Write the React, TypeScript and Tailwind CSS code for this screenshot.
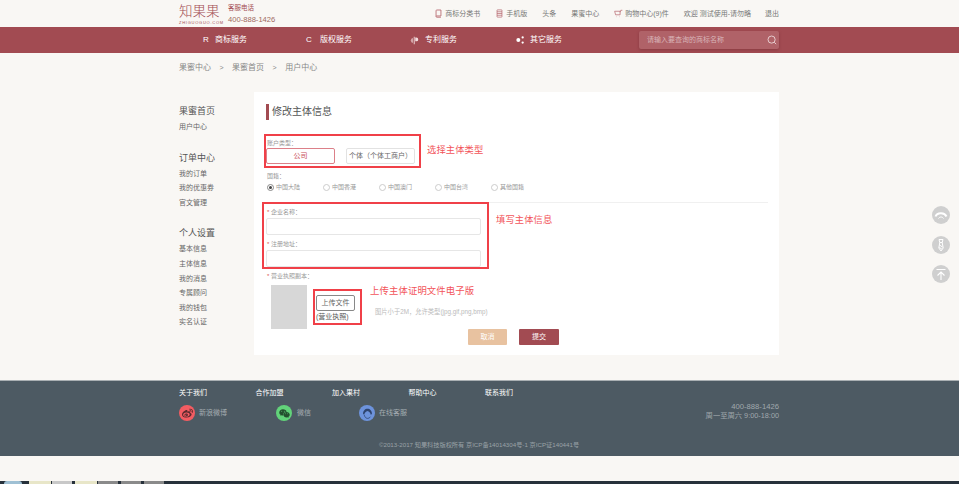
import { FaWeibo, FaWeixin } from "react-icons/fa";

const FONT = "font-['Liberation_Sans','Noto_Sans_CJK_SC',sans-serif]";

const topLinks = ["关于我们", "合作加盟", "加入果村", "帮助中心", "联系我们"];
const radios = ["中国大陆", "中国香港", "中国澳门", "中国台湾", "其他国籍"];

const sideGroups = [
  { title: "果蜜首页", items: ["用户中心"], top: "" },
  { title: "订单中心", items: ["我的订单", "我的优惠券", "官文管理"], top: "mt-[16px]" },
  { title: "个人设置", items: ["基本信息", "主体信息", "我的消息", "专属顾问", "我的钱包", "实名认证"], top: "mt-[16px]" },
];

const BookIcon = () => (
  <svg viewBox="0 0 10 12" className="h-[9px] w-[7px] shrink-0" fill="none" stroke="#b5646b" strokeWidth="1.2">
    <path d="M1.500 10V2a1 1 0 0 1 1-1h6v8.500h-6a1 1 0 0 0-1 1 1 1 0 0 0 1 .8h6" />
  </svg>
);

const MobileIcon = () => (
  <svg viewBox="0 0 10 12" className="h-[9px] w-[7px] shrink-0" fill="none" stroke="#b5646b" strokeWidth="1">
    <rect x="1.500" y="0.800" width="7" height="10.400" rx="0.600" />
    <path d="M1.500 3.500h7M1.500 6h7M1.500 8.500h7" />
  </svg>
);

const CartIcon = () => (
  <svg viewBox="0 0 14 12" className="h-[9px] w-[9px] shrink-0" fill="none" stroke="#b5646b" strokeWidth="1.1">
    <path d="M1 2.500h8.500V8H2.500zM9.500 4l1-3H13M3.500 11h.5M8 11h.5" />
  </svg>
);

const PatentIcon = () => (
  <svg viewBox="0 0 12 12" className="h-[9px] w-[9px] shrink-0" fill="#f3dfe0">
    <path d="M1 6a3.500 3.500 0 0 1 3-3.400v6.800A3.500 3.500 0 0 1 1 6z" opacity=".6" />
    <rect x="5" y="1" width="1.200" height="10" />
    <path d="M7 2h1.500a2.500 2.500 0 0 1 0 5H7z" />
  </svg>
);

const ShareIcon = () => (
  <svg viewBox="0 0 12 12" className="h-[8px] w-[8px] shrink-0" fill="#ffffff">
    <circle cx="3.500" cy="6" r="3" />
    <circle cx="10" cy="2.200" r="1.700" />
    <circle cx="10" cy="9.800" r="1.700" />
  </svg>
);

const SearchIcon = () => (
  <svg viewBox="0 0 12 12" className="h-[10px] w-[10px]" fill="none" stroke="#f0dfe0" strokeWidth="1">
    <circle cx="5.500" cy="5.500" r="4.300" />
    <path d="M8.700 8.700L11 11" />
  </svg>
);

const AgentIcon = () => (
  <svg viewBox="0 0 16 16" className="h-[13px] w-[13px]" fill="none">
    <path d="M2.500 8.500C2.500 4.500 5 2 8 2s5.500 2.500 5.500 6.500l-1.500 1C11.500 6.500 10 5.500 8 4.800 6 5.500 4.500 6.500 4 9.500z" fill="#2f4570" />
    <path d="M4 10c1 3 2.500 4 4 4s2.500-.5 3.500-2" stroke="#2f4570" strokeWidth="1" />
  </svg>
);

const BackIcon = () => (
  <svg viewBox="0 0 18 18" className="h-[18px] w-[18px]" fill="none" stroke="#ffffff">
    <path d="M3.500 10.500C5 6.500 12.500 6 14.500 10.500" strokeWidth="2" />
    <path d="M6.500 12.500C7.500 10.500 10.500 10.500 11.500 12.500" strokeWidth="1" />
  </svg>
);

const TieIcon = () => (
  <svg viewBox="0 0 18 18" className="h-[18px] w-[18px]" fill="none" stroke="#ffffff" strokeWidth="1">
    <path d="M7 3.500h4l-.8 3H7.800zM7.800 6.500L6.800 12 9 15l2.200-3-1-5.500z" />
    <path d="M7.500 9l3 2M7.300 11.500l2.500 1.500" />
  </svg>
);

const TopIcon = () => (
  <svg viewBox="0 0 18 18" className="h-[18px] w-[18px]" fill="none" stroke="#ffffff" strokeWidth="1.100">
    <path d="M4.500 4.500h9M9 15V7.500M5.500 10.500L9 7l3.500 3.500" />
  </svg>
);

const Field = ({ label }: { label: string }) => (
  <div>
    <div className="h-[8px] pl-[1px] text-[6px] leading-[8px] text-[#999]">
      <span className="text-[#d9534f]">* </span>
      {label}
    </div>
    <div className="mt-[2px] h-[17px] w-[215px] rounded-[2px] border border-[#e6e6e6] bg-white" />
  </div>
);

export default function App() {
  return (
    <div className={`${FONT} relative min-h-[484px] w-full overflow-hidden bg-[#f9f7f4]`}>
      {/* header */}
      <header className="ml-[179px] flex h-[27px] w-[600px] items-center justify-between">
        <div className="flex items-center">
          <div className="w-[42px]">
            <div className="h-[18px] text-[13.500px] font-light leading-[19px] text-[#a24b52]">知果果</div>
            <div className="text-[4px] leading-[5px] tracking-[0.750px] text-[#a24b52]">ZHIGUOGUO.COM</div>
          </div>
          <div className="ml-[7px]">
            <div className="mt-[2px] text-[6.500px] leading-[8px] text-[#a24b52]">客服电话</div>
            <div className="mt-[3px] text-[7.600px] leading-[10px] text-[#a06a5f]">400-888-1426</div>
          </div>
        </div>
        <nav className="flex items-center text-[7px] leading-[9px] text-[#777]">
          <span className="flex items-center gap-[3px]"><BookIcon />商标分类书</span>
          <span className="ml-[16px] flex items-center gap-[3px]"><MobileIcon />手机版</span>
          <span className="ml-[15px]">头条</span>
          <span className="ml-[15px]">果蜜中心</span>
          <span className="ml-[15px] flex items-center gap-[2px]"><CartIcon />购物中心(9)件</span>
          <span className="ml-[15px]">欢迎 测试使用-请勿略</span>
          <span className="ml-[14px]">退出</span>
        </nav>
      </header>

      {/* main nav */}
      <div className="flex h-[26px] items-center bg-[#a24b52] pl-[203px] text-[8px] text-white">
        <span className="flex w-[103px] items-center"><span className="w-[12px]">R</span>商标服务</span>
        <span className="flex w-[104px] items-center"><span className="w-[14px]">C</span>版权服务</span>
        <span className="flex w-[106px] items-center"><PatentIcon /><span className="ml-[6px]">专利服务</span></span>
        <span className="flex w-[123px] items-center"><ShareIcon /><span className="ml-[6px]">其它服务</span></span>
        <div className="flex h-[18px] w-[140px] items-center justify-between rounded-[2px] bg-[#b06268] pl-[8px] pr-[2px] shadow-[0_1px_3px_rgba(90,30,35,0.35)]">
          <span className="text-[7px] text-[#d9b5b8]">请输入要查询的商标名称</span>
          <SearchIcon />
        </div>
      </div>

      {/* breadcrumb */}
      <div className="ml-[179px] flex h-[39px] items-center pb-[9px] text-[8px] text-[#888]">
        <span>果蜜中心</span>
        <span className="mx-[8.500px] text-[7px]">&gt;</span>
        <span>果蜜首页</span>
        <span className="mx-[8.500px] text-[7px]">&gt;</span>
        <span>用户中心</span>
      </div>

      <div className="ml-[179px] flex w-[600px]">
        {/* sidebar */}
        <aside className="w-[75px] pt-[12px]">
          {sideGroups.map((g) => (
            <div key={g.title} className={g.top}>
              <div className="h-[14px] text-[9px] leading-[14px] text-[#555]">{g.title}</div>
              <div className="mt-[2px]">
                {g.items.map((item) => (
                  <div key={item} className="h-[14.600px] text-[7px] leading-[14px] text-[#666]">{item}</div>
                ))}
              </div>
            </div>
          ))}
        </aside>

        {/* form panel */}
        <main className="h-[263px] w-[525px] bg-white pt-[12px]">
          <h1 className="ml-[12px] h-[16px] border-l-[3px] border-[#a24b52] pl-[3px] text-[10px] font-normal leading-[16px] text-[#555]">
            修改主体信息
          </h1>

          <div className="ml-[10px] mt-[14px] flex items-center">
            <div className="h-[34px] w-[157px] border-2 border-[#f04048] pr-[4px]">
              <div className="h-[12px] pl-[1px] pt-[3px] text-[6px] leading-[8px] text-[#999]">账户类型：</div>
              <div className="flex justify-between">
                <div className="flex h-[16px] w-[69px] items-center justify-center rounded-[2px] border border-[#dc8089] text-[7px] text-[#c9505a]">公司</div>
                <div className="flex h-[16px] w-[69px] items-center justify-center rounded-[2px] border border-[#e2e2e2] text-[7px] text-[#666]">个体（个体工商户）</div>
              </div>
            </div>
            <span className="ml-[6px] text-[9.300px] tracking-[0.100px] text-[#f2545a]">选择主体类型</span>
          </div>

          <div className="ml-[13px] mt-[4px] h-[8px] text-[6px] leading-[8px] text-[#999]">国籍：</div>
          <div className="ml-[13px] mt-[2px] flex h-[10px]">
            {radios.map((r, i) => (
              <label key={r} className="flex w-[56px] items-center text-[6px] text-[#999]">
                <span className={`flex h-[7px] w-[7px] items-center justify-center rounded-full border ${i === 0 ? "border-[#888]" : "border-[#ccc]"}`}>
                  {i === 0 && <span className="h-[3px] w-[3px] rounded-full bg-[#444]" />}
                </span>
                <span className="ml-[2px]">{r}</span>
              </label>
            ))}
          </div>

          <div className="ml-[8px] mr-[11px] mt-[10px] flex items-center border-t border-[#f0f0f0]">
            <div className="-mt-px h-[67px] w-[227px] border-2 border-[#f04048] pl-[2px] pt-[4px]">
              <Field label="企业名称：" />
              <div className="mt-[5px]"><Field label="注册地址：" /></div>
            </div>
            <span className="ml-[7px] -mt-[30px] text-[9.300px] tracking-[0.100px] text-[#f2545a]">填写主体信息</span>
          </div>

          <div className="ml-[13px] mt-[3px] h-[8px] text-[6px] leading-[8px] text-[#999]">
            <span className="text-[#d9534f]">* </span>营业执照副本：
          </div>

          <div className="ml-[17px] mt-[5px] flex">
            <div className="h-[44px] w-[36px] bg-[#d7d7d7]" />
            <div className="ml-[6px] mt-[4px] flex h-[36px] w-[49px] flex-col border-2 border-[#f04048] pl-[1px] pt-[4px]">
              <div className="flex h-[16px] w-[39px] items-center justify-center rounded-[2px] border border-[#888] text-[7px] text-[#666]">上传文件</div>
              <div className="mt-[1px] whitespace-nowrap text-[7px] leading-[9px] text-[#555]">(营业执照)</div>
            </div>
            <div className="ml-[8px]">
              <div className="text-[9.400px] leading-[12px] tracking-[0.100px] text-[#f2545a]">上传主体证明文件电子版</div>
              <div className="ml-[5px] mt-[11px] text-[6.300px] leading-[8px] text-[#bbb]">图片小于2M，允许类型(jpg,gif,png,bmp)</div>
            </div>
          </div>

          <div className="ml-[214px] flex">
            <button className="flex h-[16px] w-[39px] items-center justify-center rounded-[1px] bg-[#e8c2a0] text-[7px] text-white">取消</button>
            <button className="ml-[12px] flex h-[16px] w-[40px] items-center justify-center rounded-[1px] bg-[#a24b52] text-[7px] text-white">提交</button>
          </div>
        </main>
      </div>

      {/* footer */}
      <footer className="mt-[25px] h-[76px] border-t border-[#aab0b3] bg-[#4d5a63] pl-[179px] pr-[180px]">
        <div className="flex h-[24px] items-center text-[7px] text-white">
          {topLinks.map((t) => (
            <span key={t} className="w-[76.500px]">{t}</span>
          ))}
        </div>
        <div className="relative flex h-[16px] items-center text-[7px] text-[#a5adb2]">
          <span className="flex w-[97px] items-center gap-[4px]">
            <span className="flex h-[16px] w-[16px] items-center justify-center rounded-full bg-[#f25c62]"><FaWeibo className="h-[11px] w-[11px] text-[#5a2a2e]" /></span>
            新浪微博
          </span>
          <span className="flex w-[83px] items-center gap-[5px]">
            <span className="flex h-[16px] w-[16px] items-center justify-center rounded-full bg-[#62d37a]"><FaWeixin className="h-[11px] w-[11px] text-[#24502f]" /></span>
            微信
          </span>
          <span className="flex items-center gap-[4px]">
            <span className="flex h-[16px] w-[16px] items-center justify-center rounded-full bg-[#6d93dc]"><AgentIcon /></span>
            在线客服
          </span>
          <div className="absolute right-0 -top-[3px] text-right leading-[9px] text-[#a0a8ad]">
            <div className="text-[7.700px]">400-888-1426</div>
            <div className="text-[7.300px]">周一至周六 9:00-18:00</div>
          </div>
        </div>
        <div className="mt-[20px] text-center text-[6.200px] leading-[8px] text-[#9aa2a7]">
          ©2013-2017 知果科技版权所有 京ICP备14014304号-1 京ICP证140441号
        </div>
      </footer>

      {/* windows taskbar at the very bottom of the capture */}
      <div className="mt-[25px] flex h-[3px] items-end bg-[#27313b]">
        <span className="ml-[4px] h-[3px] w-[18px] rounded-t-full bg-[#9fc0d4]" />
        <span className="ml-[7px] h-[3px] w-[22px] bg-[#e8e6c8]" />
        <span className="ml-[1px] h-[3px] w-[20px] bg-[#c8c8c8]" />
        <span className="ml-[3px] h-[3px] w-[22px] bg-[#e8e6c8]" />
        <span className="ml-[1px] h-[3px] w-[20px] bg-[#8a8a8a]" />
        <span className="ml-[3px] h-[3px] w-[20px] bg-[#8a8a8a]" />
        <span className="ml-[3px] h-[3px] w-[20px] bg-[#8a8a8a]" />
      </div>

      {/* floating side buttons */}
      <div className="absolute left-[932px] top-[206px] flex flex-col gap-[11.500px]">
        <span className="flex h-[18px] w-[18px] items-center justify-center rounded-full bg-[#cfcfcf]"><BackIcon /></span>
        <span className="flex h-[18px] w-[18px] items-center justify-center rounded-full bg-[#cfcfcf]"><TieIcon /></span>
        <span className="flex h-[18px] w-[18px] items-center justify-center rounded-full bg-[#cfcfcf]"><TopIcon /></span>
      </div>
    </div>
  );
}
